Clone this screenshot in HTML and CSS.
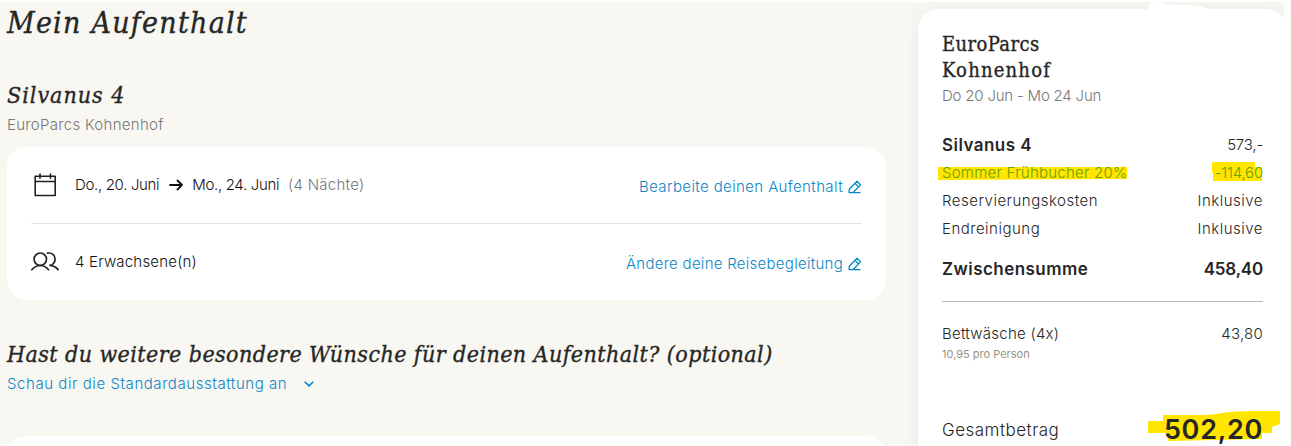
FILE: index.html
```
<!DOCTYPE html>
<html lang="de">
<head>
  <meta charset="UTF-8">
  <title>Mein Aufenthalt</title>
  <meta name="viewport" content="width=device-width, initial-scale=1.0">
  <link rel="stylesheet" href="styles.css">
</head>
<body>
  <div class="page">
    <main class="main">
      <h1>Mein Aufenthalt</h1>
      <h2 class="name">Silvanus 4</h2>
      <p class="park">EuroParcs Kohnenhof</p>

      <section class="card">
        <div class="row">
          <svg class="icon" viewBox="0 0 28 28" fill="none" stroke="#222" stroke-width="1.6" stroke-linejoin="round" stroke-linecap="round">
            <path d="M4.200 5.200h20v19.300h-20zM4.200 10.500h20M9 3v4.200M19.500 3v4.200"/>
          </svg>
          <div class="dates">
            <span class="date">Do., 20. Juni</span>
            <svg class="arrow" viewBox="0 0 14 12" fill="none" stroke="#111" stroke-width="1.8" stroke-linecap="round" stroke-linejoin="round"><path d="M1 6h12M8.500 1.500L13 6l-4.500 4.500"/></svg>
            <span class="date">Mo., 24. Juni</span>
            <span class="nights">(4 Nächte)</span>
          </div>
          <a class="edit"><span class="edit-stay">Bearbeite deinen Aufenthalt</span>
            <svg class="pen" viewBox="0 0 14 14" fill="none" stroke="#0089ca" stroke-width="1.3" stroke-linejoin="round"><path d="M1.200 12.700V9.200L9 1.300l3.600 3.600-7.800 7.800zM7 3.400L10.600 7M1.200 12.700H12.500"/></svg>
          </a>
        </div>
        <div class="row">
          <svg class="icon" viewBox="0 0 28 28" fill="none" stroke="#222" stroke-width="1.7" stroke-linecap="round">
            <circle cx="9.300" cy="11.200" r="6.200"/>
            <path d="M.8 21.700c2.300-2.700 5.200-4.200 8.500-4.200s6 1.500 8.200 4.200M16.500 5.200c4.300-.9 7.600 2 7.600 6 0 3.400-2.500 6.100-5.800 6.200 3.500 0 6.500 1.400 8.800 4.200"/>
          </svg>
          <div class="dates"><span class="guests">4 Erwachsene(n)</span></div>
          <a class="edit"><span class="edit-guests">Ändere deine Reisebegleitung</span>
            <svg class="pen" viewBox="0 0 14 14" fill="none" stroke="#0089ca" stroke-width="1.3" stroke-linejoin="round"><path d="M1.200 12.700V9.200L9 1.300l3.600 3.600-7.800 7.800zM7 3.400L10.600 7M1.200 12.700H12.500"/></svg>
          </a>
        </div>
      </section>

      <h2 class="wishes">Hast du weitere besondere Wünsche für deinen Aufenthalt? (optional)</h2>
      <a class="more"><span>Schau dir die Standardausstattung an</span>
        <svg class="chevron" viewBox="0 0 10 6" fill="none" stroke="#0089ca" stroke-width="1.6"><path d="M.7.7L5 4.900 9.300.7"/></svg>
      </a>
      <section class="card next"></section>
    </main>

    <aside class="summary">
      <svg class="marker" viewBox="0 0 1291 446">
        <path fill="#fff" d="M1147 12c0-5 3-10 9-10 6 0 8 2 14 2.500l22 .8c8 .5 14 3 24 4.700v2z"/>
        <path fill="#ffe500" d="M938 167h189v12l-189 1zM1212 162h43v5h7v14h-49v-8h-1zM1148 421h15v-6h38c12 0 18-2 29-3 16-1.500 34-1 50-1v13l-8 3v6h-10v6l-94 2v-8h-20z"/>
      </svg>
      <div class="lines">
        <h3>EuroParcs<br><span class="place">Kohnenhof</span></h3>
        <p class="when">Do 20 Jun - Mo 24 Jun</p>
        <div class="line house"><b>Silvanus 4</b><span class="price">573,-</span></div>
        <div class="line discount"><span>Sommer Frühbucher 20%</span><span class="price">-114,60</span></div>
        <div class="line included"><span>Reservierungskosten</span><span>Inklusive</span></div>
        <div class="line included"><span>Endreinigung</span><span>Inklusive</span></div>
        <div class="line subtotal"><b>Zwischensumme</b><b class="price">458,40</b></div>
        <div class="line linen"><span>Bettwäsche (4x)</span><span>43,80</span></div>
        <p class="each">10,95 pro Person</p>
        <div class="line total"><span>Gesamtbetrag</span><b>502,20</b></div>
      </div>
    </aside>
  </div>
</body>
</html>
```
FILE: styles.css
```
:root {
  --bg: #f8f7f1;
  --ink: #262626;
  --blue: #0d86c8;
  --muted: #777;
  --radius: 20px;
}

* {
  box-sizing: border-box;
}

body {
  margin: 0;
  background: #fff;
  color: var(--ink);
  font: 300 15px/20px Inter, sans-serif;
}

h1, h2, h3, p {
  margin: 0;
}

.page {
  display: flex;
  width: 1284px;
  height: 444px;
  margin-top: 2px;
  padding-left: 7px;
  background: var(--bg);
  overflow: hidden;
}

.main {
  width: 879px;
  flex-shrink: 0;
}

h1, h2, h3 {
  font-family: "DejaVu Serif Condensed", "DejaVu Serif", serif;
  font-stretch: condensed;
  font-weight: 400;
  white-space: nowrap;
  -webkit-text-stroke: 0.35px var(--ink);
}

h1, h2 {
  font-style: italic;
}

h1 {
  font-size: 30px;
  line-height: 42px;
  letter-spacing: 1.25px;
}

h2 {
  font-size: 23px;
  line-height: 30px;
  letter-spacing: 0.43px;
}

.name {
  margin-top: 36px;
  letter-spacing: 1px;
}

.park {
  margin-top: 5px;
  color: var(--muted);
  letter-spacing: 0.3px;
}

.card {
  height: 153px;
  margin-top: 12px;
  padding: 0 24px;
  background: #fff;
  border-radius: var(--radius);
}

.row {
  display: flex;
  align-items: center;
  height: 75px;
}

.row:first-child {
  height: 77px;
  border-bottom: 1px solid #e4e4e4;
}

.icon {
  width: 28px;
  height: 28px;
  margin-right: 16px;
}

.dates {
  display: flex;
  align-items: center;
  flex: 1;
  color: #111;
}

.date {
  letter-spacing: -0.33px;
}

.arrow {
  width: 14px;
  height: 12px;
  margin: 0 9px 0 10px;
}

.nights {
  margin-left: 9px;
  color: var(--muted);
  letter-spacing: 0.25px;
}

.guests {
  letter-spacing: 0.2px;
}

.edit, .more {
  display: flex;
  align-items: center;
  color: var(--blue);
}

.edit {
  padding-top: 4px;
}

.edit-stay {
  letter-spacing: 0.38px;
}

.edit-guests {
  letter-spacing: 0.28px;
}

.pen {
  width: 14px;
  height: 14px;
  margin-left: 5px;
}

.wishes {
  margin-top: 39px;
}

.more {
  margin-top: 5px;
  letter-spacing: 0.56px;
}

.chevron {
  width: 10px;
  height: 6px;
  margin-left: 17px;
}

.next {
  margin-top: 42px;
}

.summary {
  width: 369px;
  height: 480px;
  margin: 7px 0 0 32px;
  padding: 22px 0 0 24px;
  flex-shrink: 0;
  background: #fff;
  border-radius: var(--radius);
  box-shadow: 0 0 18px rgba(0, 0, 0, 0.06);
}

/* highlighter strokes under the prices */
.marker {
  position: absolute;
  top: 0;
  left: 0;
  width: 1291px;
  height: 446px;
}

.lines {
  position: relative;
  width: 321px;
}

h3 {
  font-size: 20px;
  line-height: 26px;
  letter-spacing: 0.4px;
}

.place {
  letter-spacing: 1.2px;
}

.when {
  margin-top: 3px;
  color: var(--muted);
  letter-spacing: -0.2px;
}

.line {
  display: flex;
  align-items: center;
  justify-content: space-between;
  height: 28px;
  letter-spacing: 0.25px;
}

.line b {
  font-size: 17px;
  font-weight: 600;
  letter-spacing: 0.45px;
}

.line .price {
  letter-spacing: -0.2px;
}

.house {
  margin-top: 25px;
}

.discount {
  color: #68a000;
}

.included {
  letter-spacing: 0.5px;
}

.subtotal {
  height: 59px;
  padding-bottom: 7px;
  border-bottom: 1px solid #bbb;
}

.linen {
  margin-top: 18px;
}

.each {
  margin-top: -4px;
  color: #97927f;
  font-size: 11px;
  font-weight: 400;
}

.total {
  height: 36px;
  margin-top: 48px;
}

.total span {
  font-size: 17px;
  letter-spacing: 0.5px;
}

.total b {
  font-size: 27px;
  letter-spacing: 0.7px;
}
```
